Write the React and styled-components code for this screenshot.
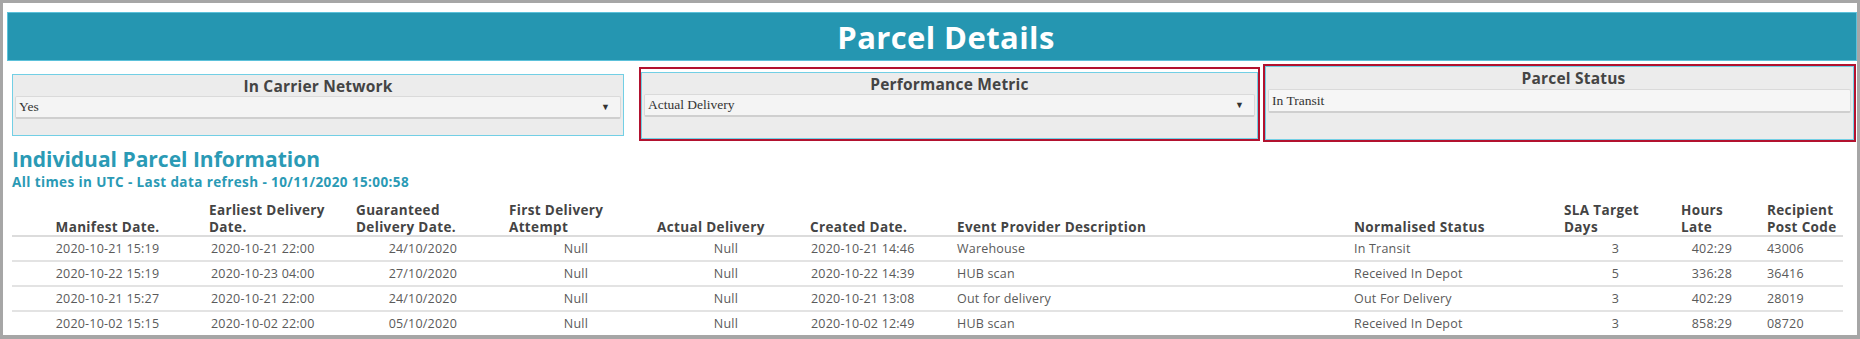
import React from 'react';
import styled, { createGlobalStyle } from 'styled-components';

const colors = {
  frame: '#a6a6a6',
  teal: '#2596b1',
  tealText: '#2a9ab5',
  panelLine: '#72cfe5',
  panelBg: '#ececec',
  inputBg: '#f4f4f4',
  red: '#b2122f',
  head: '#444444',
  text: '#5a5a5a',
  rule: '#e3e3e3',
};

const sans = `"Open Sans", "Liberation Sans", sans-serif`;

const GlobalStyle = createGlobalStyle`
  * { box-sizing: border-box; }
  html, body { margin: 0; padding: 0; background: #fff; }
  body { font-family: ${sans}; }
`;

const Frame = styled.div`
  width: 1860px;
  height: 339px;
  border: 3px solid ${colors.frame};
  border-bottom-width: 4px;
  padding: 9px 0 0 4px;
  overflow: hidden;
  background: #fff;
`;

const TitleBar = styled.header`
  height: 49px;
  background: ${colors.teal};
  border: 1px solid #5cc1da;
  display: flex;
  align-items: center;
  justify-content: center;
  padding-left: 28px;
  color: #fff;
  font-family: ${sans};
  font-weight: 700;
  font-size: 31px;
  letter-spacing: 0.4px;
`;

const FilterRow = styled.div`
  display: flex;
  align-items: flex-start;
  margin-top: 3px;
`;

const Slot = styled.div`
  width: ${p => p.$width}px;
  height: ${p => p.$height}px;
  margin-left: ${p => p.$left}px;
  margin-top: ${p => p.$top}px;
  border: 2px solid ${p => (p.$highlight ? colors.red : 'transparent')};
  padding-top: ${p => p.$padTop || 0}px;
  display: flex;
  flex-direction: column;
`;

const Panel = styled.div`
  flex: 1;
  border: 1px solid ${colors.panelLine};
  background: ${colors.panelBg};
  display: flex;
  flex-direction: column;
`;

const PanelTitle = styled.div`
  height: ${p => p.$h}px;
  display: flex;
  align-items: center;
  justify-content: center;
  padding-left: ${p => p.$shift || 0}px;
  font-family: ${sans};
  font-weight: 700;
  font-size: 15.5px;
  letter-spacing: 0.2px;
  color: ${colors.head};
`;

const SelectBox = styled.div`
  height: ${p => p.$h}px;
  margin: 0 2px;
  background: ${p => (p.$plain ? '#f6f6f6' : colors.inputBg)};
  border: 1px solid #dadada;
  border-bottom: 2px solid #cfcfcf;
  border-radius: 2px;
  display: flex;
  align-items: center;
  justify-content: space-between;
  padding: 0 10px 0 3px;
  font-family: "Liberation Serif", "Times New Roman", serif;
  font-size: 13.5px;
  color: #333;
`;

const Caret = styled.span`
  font-size: 9px;
  color: #333;
`;

const Footer = styled.div`
  flex: 1;
`;

const SectionTitle = styled.h2`
  margin: 4px 0 0 5px;
  font-family: ${sans};
  font-weight: 700;
  font-size: 21px;
  line-height: 26px;
  color: ${colors.tealText};
`;

const SubTitle = styled.div`
  margin: 2px 0 0 5px;
  font-family: ${sans};
  font-weight: 700;
  font-size: 13.5px;
  letter-spacing: 0.4px;
  line-height: 16px;
  color: ${colors.tealText};
`;

const Table = styled.div`
  margin: 10px 0 0 5px;
  width: 1831px;
`;

const Row = styled.div`
  display: grid;
  grid-template-columns: ${p => p.$cols};
  height: ${p => p.$h}px;
  border-bottom: 2px solid ${p => (p.$last ? 'transparent' : p.$head ? '#dcdcdc' : colors.rule)};
  padding-bottom: ${p => p.$padBottom || 0}px;
`;

const HeadCell = styled.div`
  display: flex;
  flex-direction: column;
  justify-content: flex-end;
  text-align: ${p => p.$align};
  padding: 0 ${p => p.$pr}px 0 ${p => p.$pl}px;
  font-family: ${sans};
  font-weight: 700;
  font-size: 13.5px;
  letter-spacing: 0.35px;
  line-height: 16.5px;
  color: ${colors.head};
  white-space: nowrap;
`;

const Cell = styled.div`
  display: flex;
  align-items: center;
  justify-content: ${p => (p.$align === 'right' ? 'flex-end' : p.$align === 'center' ? 'center' : 'flex-start')};
  padding: 0 ${p => p.$pr}px 0 ${p => p.$pl}px;
  font-family: ${sans};
  font-size: 12.5px;
  letter-spacing: 0.2px;
  color: ${colors.text};
  white-space: nowrap;
`;

const columns = [
  { label: ['Manifest Date.'], w: 191, head: 'center', cell: 'center', hl: 0, hr: 0, cl: 0, cr: 0 },
  { label: ['Earliest Delivery', 'Date.'], w: 150, head: 'left', cell: 'left', hl: 6, hr: 0, cl: 8, cr: 0 },
  { label: ['Guaranteed', 'Delivery Date.'], w: 150, head: 'left', cell: 'right', hl: 3, hr: 0, cl: 0, cr: 46 },
  { label: ['First Delivery', 'Attempt'], w: 150, head: 'left', cell: 'right', hl: 6, hr: 0, cl: 0, cr: 65 },
  { label: ['Actual Delivery'], w: 150, head: 'left', cell: 'right', hl: 4, hr: 0, cl: 0, cr: 65 },
  { label: ['Created Date.'], w: 150, head: 'left', cell: 'left', hl: 7, hr: 0, cl: 8, cr: 0 },
  { label: ['Event Provider Description'], w: 395, head: 'left', cell: 'left', hl: 4, hr: 0, cl: 4, cr: 0 },
  { label: ['Normalised Status'], w: 210, head: 'left', cell: 'left', hl: 6, hr: 0, cl: 6, cr: 0 },
  { label: ['SLA Target', 'Days'], w: 117, head: 'left', cell: 'right', hl: 6, hr: 0, cl: 0, cr: 56 },
  { label: ['Hours', 'Late'], w: 86, head: 'left', cell: 'right', hl: 6, hr: 0, cl: 0, cr: 29 },
  { label: ['Recipient', 'Post Code'], w: 0, head: 'left', cell: 'left', hl: 6, hr: 0, cl: 6, cr: 0 },
];

const gridCols = columns.map(c => (c.w ? `${c.w}px` : '1fr')).join(' ');

const rows = [
  ['2020-10-21 15:19', '2020-10-21 22:00', '24/10/2020', 'Null', 'Null', '2020-10-21 14:46', 'Warehouse', 'In Transit', '3', '402:29', '43006'],
  ['2020-10-22 15:19', '2020-10-23 04:00', '27/10/2020', 'Null', 'Null', '2020-10-22 14:39', 'HUB scan', 'Received In Depot', '5', '336:28', '36416'],
  ['2020-10-21 15:27', '2020-10-21 22:00', '24/10/2020', 'Null', 'Null', '2020-10-21 13:08', 'Out for delivery', 'Out For Delivery', '3', '402:29', '28019'],
  ['2020-10-02 15:15', '2020-10-02 22:00', '05/10/2020', 'Null', 'Null', '2020-10-02 12:49', 'HUB scan', 'Received In Depot', '3', '858:29', '08720'],
];

const filters = [
  { title: 'In Carrier Network', value: 'Yes', caret: true, w: 616, h: 66, left: 3, top: 8, pad: 0, hl: false, th: 21, sh: 23, shift: 0 },
  { title: 'Performance Metric', value: 'Actual Delivery', caret: true, w: 621, h: 74, left: 13, top: 3, pad: 3, hl: true, th: 21, sh: 23, shift: 0 },
  { title: 'Parcel Status', value: 'In Transit', caret: false, w: 593, h: 78, left: 3, top: 0, pad: 0, hl: true, th: 22, sh: 24, shift: 28 },
];

const App = () => (
  <>
    <GlobalStyle />
    <Frame>
      <TitleBar>Parcel Details</TitleBar>
      <FilterRow>
        {filters.map(f => (
          <Slot key={f.title} $width={f.w} $height={f.h} $left={f.left} $top={f.top} $padTop={f.pad} $highlight={f.hl}>
            <Panel>
              <PanelTitle $h={f.th} $shift={f.shift}>{f.title}</PanelTitle>
              <SelectBox $h={f.sh} $plain={!f.caret}>
                <span>{f.value}</span>
                {f.caret && <Caret>▼</Caret>}
              </SelectBox>
              <Footer />
            </Panel>
          </Slot>
        ))}
      </FilterRow>
      <SectionTitle>Individual Parcel Information</SectionTitle>
      <SubTitle>All times in UTC - Last data refresh - 10/11/2020 15:00:58</SubTitle>
      <Table>
        <Row $cols={gridCols} $h={37} $head $padBottom={0}>
          {columns.map((c, i) => (
            <HeadCell key={i} $align={c.head} $pl={c.hl} $pr={c.hr}>
              {c.label.map(l => (
                <span key={l}>{l}</span>
              ))}
            </HeadCell>
          ))}
        </Row>
        {rows.map((r, ri) => (
          <Row key={ri} $cols={gridCols} $h={25} $last={ri === rows.length - 1}>
            {r.map((v, ci) => (
              <Cell key={ci} $align={columns[ci].cell} $pl={columns[ci].cl} $pr={columns[ci].cr}>
                {v}
              </Cell>
            ))}
          </Row>
        ))}
      </Table>
    </Frame>
  </>
);

export default App;
